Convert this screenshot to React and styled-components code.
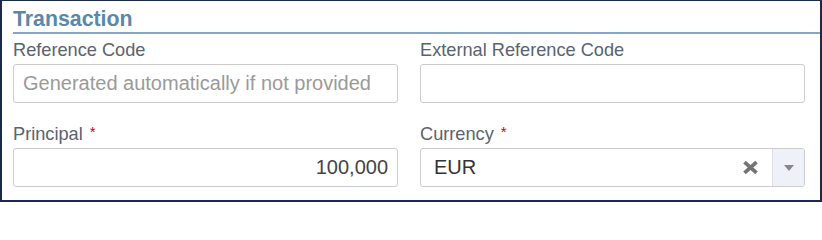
import React from 'react';
import styled, { createGlobalStyle } from 'styled-components';

const GlobalStyle = createGlobalStyle`
  html, body {
    margin: 0;
    padding: 0;
    background: #ffffff;
  }
  * {
    box-sizing: border-box;
  }
`;

const Frame = styled.div`
  width: 822px;
  height: 202px;
  border: 1px solid #1b2a48;
  border-left-width: 2px;
  border-right-width: 2px;
  border-bottom-width: 2px;
  background: #fff;
  font-family: "Liberation Sans", Arial, Helvetica, sans-serif;
  overflow: hidden;
`;

const Section = styled.section`
  padding-left: 11px;
`;

const Heading = styled.h2`
  margin: 0;
  padding: 6px 0 1px 0;
  font-size: 21.3px;
  line-height: 24px;
  font-weight: bold;
  color: #5b87a9;
  border-bottom: 2px solid #86a6c3;
`;

const Fields = styled.div`
  display: grid;
  grid-template-columns: 385px 385px;
  column-gap: 22px;
  row-gap: 20px;
  padding-top: 5px;
`;

const Field = styled.div`
  display: flex;
  flex-direction: column;
`;

const Label = styled.label`
  font-size: 18.2px;
  line-height: 22px;
  color: #5a6370;
  margin-bottom: 3px;
`;

const Required = styled.span`
  color: #d0021b;
  font-size: 15px;
  margin-left: 7px;
  vertical-align: top;
  line-height: 18px;
`;

const Input = styled.input`
  height: 39px;
  width: 100%;
  border: 1px solid #cccccc;
  border-radius: 3px;
  padding: 0 9px;
  font-family: inherit;
  font-size: 20px;
  color: #444;
  text-align: ${p => (p.$align === 'right' ? 'right' : 'left')};
  outline: none;
  &::placeholder {
    color: #9a9a9a;
  }
`;

const Select = styled.div`
  height: 39px;
  display: flex;
  align-items: stretch;
  border: 1px solid #cccccc;
  border-radius: 3px;
  overflow: hidden;
`;

const SelectValue = styled.div`
  flex: 1;
  display: flex;
  align-items: center;
  padding-left: 13px;
  font-size: 20px;
  color: #333;
`;

const Clear = styled.span`
  display: flex;
  align-items: center;
  justify-content: center;
  width: 28px;
  margin-right: 8px;
`;

const Toggle = styled.span`
  width: 32px;
  display: flex;
  align-items: center;
  justify-content: center;
  background: #eef1f8;
  border-left: 1px solid #dcdfe5;
`;

export default function App() {
  return (
    <>
      <GlobalStyle />
      <Frame>
        <Section>
          <Heading>Transaction</Heading>
          <Fields>
            <Field>
              <Label>Reference Code</Label>
              <Input placeholder="Generated automatically if not provided" readOnly />
            </Field>
            <Field>
              <Label>External Reference Code</Label>
              <Input readOnly />
            </Field>
            <Field>
              <Label>Principal<Required>*</Required></Label>
              <Input $align="right" value="100,000" readOnly />
            </Field>
            <Field>
              <Label>Currency<Required>*</Required></Label>
              <Select>
                <SelectValue>EUR</SelectValue>
                <Clear>
                  <svg width="15" height="13" viewBox="0 0 15 13">
                    <path d="M1.5 1.2 L13.5 11.8 M13.5 1.2 L1.5 11.8" stroke="#737373" strokeWidth="3.8" strokeLinecap="butt" />
                  </svg>
                </Clear>
                <Toggle>
                  <svg width="10" height="6" viewBox="0 0 10 6">
                    <path d="M0 0 H10 L5 6 Z" fill="#888" />
                  </svg>
                </Toggle>
              </Select>
            </Field>
          </Fields>
        </Section>
      </Frame>
    </>
  );
}
